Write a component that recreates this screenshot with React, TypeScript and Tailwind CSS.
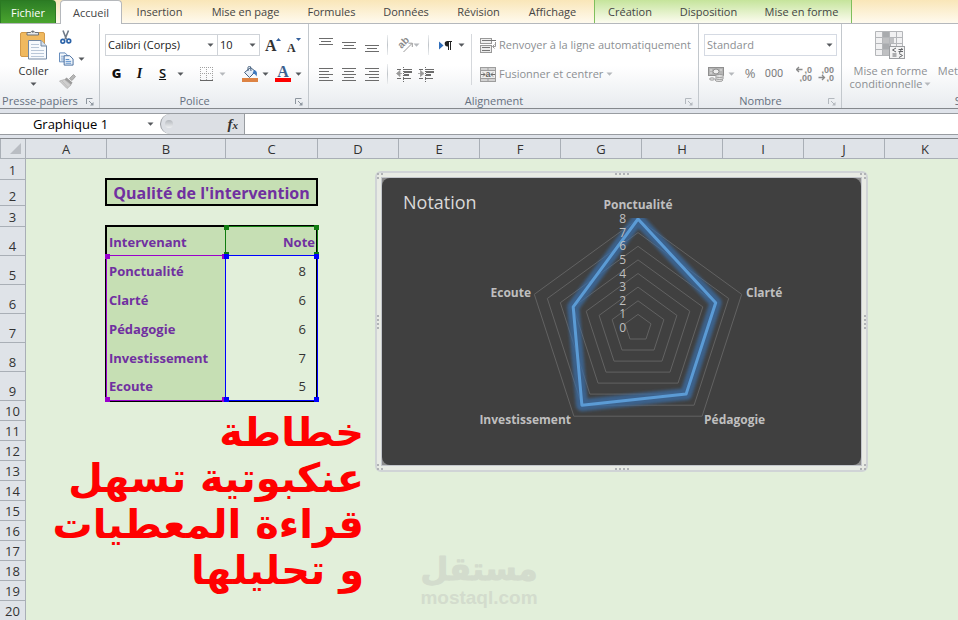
import type { ReactNode } from "react";
import clsx from "clsx";

const TABS = [
  { label: "Insertion", width: "w-[75px]" },
  { label: "Mise en page", width: "w-[97px]" },
  { label: "Formules", width: "w-[75px]" },
  { label: "Données", width: "w-[74px]" },
  { label: "Révision", width: "w-[71px]" },
  { label: "Affichage", width: "w-[77px]" },
];

const CHART_TABS = [
  { label: "Création", width: "w-[70px]" },
  { label: "Disposition", width: "w-[87px]" },
  { label: "Mise en forme", width: "w-[99px]" },
];

const COLUMNS = [
  { name: "A", width: "w-[81px]" },
  { name: "B", width: "w-[119px]" },
  { name: "C", width: "w-[92px]" },
  { name: "D", width: "w-[81px]" },
  { name: "E", width: "w-[81px]" },
  { name: "F", width: "w-[81px]" },
  { name: "G", width: "w-[81px]" },
  { name: "H", width: "w-[81px]" },
  { name: "I", width: "w-[81px]" },
  { name: "J", width: "w-[81px]" },
  { name: "K", width: "w-[81px]" },
];

const ROWS = [
  "h-[21px]",
  "h-[26px]",
  "h-[21px]",
  ...Array(6).fill("h-[29px]"),
  ...Array(11).fill("h-5"),
];

const NOTES = [
  { label: "Ponctualité", value: 8 },
  { label: "Clarté", value: 6 },
  { label: "Pédagogie", value: 6 },
  { label: "Investissement", value: 7 },
  { label: "Ecoute", value: 5 },
];

const CAPTION = ["خطاطة", "عنكبوتية تسهل", "قراءة المعطيات", "و تحليلها"];

/* ---------- small ribbon pieces ---------- */

const Caret = ({ muted = false }: { muted?: boolean }) => (
  <svg width="7" height="4" viewBox="0 0 7 4" aria-hidden="true" className="shrink-0">
    <path d="M0.5 0.5h6L3.5 3.8z" fill={muted ? "#b5b8bc" : "#55585c"} />
  </svg>
);

const Launcher = ({ muted = false }: { muted?: boolean }) => (
  <button type="button" aria-label="Options" className="flex size-2">
    <svg width="8" height="8" viewBox="0 0 8 8" fill="none" stroke={muted ? "#b3b8be" : "#8d959e"}>
      <path d="M0.5 6V0.5H6.5M3 3l3 3" />
      <path d="M4 7.5h3.500V4z" fill={muted ? "#b3b8be" : "#8d959e"} stroke="none" />
    </svg>
  </button>
);

const Separator = () => (
  <span className="h-5 w-px shrink-0 bg-linear-to-b from-[#eceef0] via-[#bfc4c9] to-[#eceef0]" />
);

type IconButtonProps = {
  label: string;
  className?: string;
  children: ReactNode;
};

const IconButton = ({ label, className, children }: IconButtonProps) => (
  <button
    type="button"
    aria-label={label}
    className={clsx("flex h-[22px] shrink-0 items-center justify-center", className)}
  >
    {children}
  </button>
);

type GroupProps = {
  title: string;
  className?: string;
  launcher?: boolean;
  muted?: boolean;
  children: ReactNode;
};

const Group = ({ title, className, launcher = true, muted, children }: GroupProps) => (
  <section
    aria-label={title}
    className={clsx(
      "flex h-[84px] shrink-0 flex-col justify-between border-r border-[#c3c8cd] bg-linear-to-b from-white from-50% to-[#e8ebef]",
      className
    )}
  >
    <div className="pt-[10px]">{children}</div>
    <div className="flex h-[13px] items-center gap-[6px] pr-[5px]">
      <h2 className="flex-1 text-center text-[#66707f]">{title}</h2>
      {launcher && <Launcher muted={muted} />}
    </div>
  </section>
);

type ComboProps = {
  label: string;
  value: string;
  className?: string;
  muted?: boolean;
};

const Combo = ({ label, value, className, muted }: ComboProps) => (
  <label className={clsx("relative block", className)}>
    <span className="sr-only">{label}</span>
    <select
      defaultValue={value}
      className={clsx(
        "h-[22px] w-full appearance-none border bg-white pl-[2px]",
        muted ? "border-[#d5dae3] text-[#8c8f93]" : "border-[#cfd3d8] text-[#1a1a1a]"
      )}
    >
      <option>{value}</option>
    </select>
    <span className="pointer-events-none absolute top-[9px] right-1">
      <Caret />
    </span>
  </label>
);

/* ---------- icons ---------- */

const PasteIcon = () => (
  <svg width="28" height="31" viewBox="0 0 28 31" aria-hidden="true">
    <rect x="0.5" y="3.500" width="24" height="24" rx="1.500" fill="#f0b95f" stroke="#d39a4a" />
    <path d="M7 6V3.500h3.500a2.500 2.500 0 0 1 4.500 0H18.500V6z" fill="#e6e8ea" stroke="#6d7278" />
    <circle cx="12.800" cy="2.800" r="1" fill="#6d7278" />
    <path d="M8.500 11.500h12.500l5.500 5.500v13h-18z" fill="#f7fafd" stroke="#7288a3" />
    <path d="M21 11.500v5.500h5.500" fill="#d5e0ec" stroke="#7288a3" />
    <path d="M11 15.500h8M11 18.500h8M11 21.500h13M11 24.500h13M11 27.500h13" stroke="#b9c7d8" />
  </svg>
);

const ScissorsIcon = () => (
  <svg width="12" height="15" viewBox="0 0 12 15" fill="none" aria-hidden="true">
    <path d="M3 0.500l3.500 9M8.500 0.500L5 9" stroke="#6f7a88" strokeWidth="1.600" />
    <circle cx="2.800" cy="11.300" r="1.900" stroke="#2a62a8" strokeWidth="1.600" />
    <circle cx="8.800" cy="11" r="1.900" stroke="#2a62a8" strokeWidth="1.600" />
  </svg>
);

const CopyIcon = () => (
  <svg width="16" height="14" viewBox="0 0 16 14" aria-hidden="true">
    <path d="M0.500 0.500h6l3 3v6.500h-9z" fill="#f4f8fc" stroke="#5b84b8" />
    <path d="M2 4h4M2 6h5M2 8h4" stroke="#7da0cb" />
    <path d="M5.500 3.500h6l3.500 3.500v6.500h-9.500z" fill="#f4f8fc" stroke="#41699c" />
    <path d="M7 7.500h4M7 9.500h6M7 11.500h6" stroke="#4f86c6" />
  </svg>
);

const BrushIcon = () => (
  <svg width="17" height="15" viewBox="0 0 17 15" aria-hidden="true">
    <path d="M10.500 4.500L14.500 0.500l2 2-3.500 4z" fill="#b6b6b6" stroke="#999" strokeWidth="0.800" />
    <path d="M7.500 3.500l6 5-1.500 2.500-6.500-5.500z" fill="#9c9c9c" />
    <path d="M5.500 5.500l6.500 5.500-4 3.500L0.500 7z" fill="#cfcfcf" stroke="#b0b0b0" strokeWidth="0.800" />
    <path d="M3 7l6 6.500" stroke="#b5b5b5" strokeWidth="0.700" />
  </svg>
);

const GrowIcon = ({ small = false }: { small?: boolean }) => (
  <span className="relative flex h-[22px] w-4 items-end pb-[2px]">
    <span
      className={clsx(
        "font-['Liberation_Serif',serif] font-bold text-[#333]",
        small ? "text-xs leading-3" : "text-base leading-4"
      )}
    >
      A
    </span>
    <svg width="5" height="3" viewBox="0 0 5 3" className={clsx("absolute top-[4px]", small ? "left-[9px]" : "left-[11px]")}>
      <path d={small ? "M0 0h5L2.500 3z" : "M0 3h5L2.500 0z"} fill="#35619c" />
    </svg>
  </span>
);

const BordersIcon = () => (
  <svg width="13" height="14" viewBox="0 0 13 14" fill="none" shapeRendering="crispEdges" aria-hidden="true">
    <path d="M0 0.500h13M0 6.500h13M0.500 0v13M6.500 0v13M12.500 0v13" stroke="#a2a2a2" strokeDasharray="1 1" />
    <path d="M0 13.500h13" stroke="#666" />
  </svg>
);

const BucketIcon = () => (
  <svg width="16" height="16" viewBox="0 0 16 16" aria-hidden="true">
    <path d="M2.500 6.500L8.500 1.500l5 4-6 6z" fill="#e5eef8" stroke="#46607f" />
    <path d="M6 5V1.500a1.500 1.500 0 0 1 2.500-.8L9 5" fill="none" stroke="#46607f" />
    <path d="M12 4c3 .500 3.500 3 2.500 6.500-1-2-2-3-4-3z" fill="#3f79bd" />
    <rect y="12" width="16" height="4" fill="#dd8344" />
  </svg>
);

const FontColorIcon = () => (
  <span className="flex h-4 w-4 flex-col items-center border-b-4 border-[#fe0000]">
    <span className="font-['Liberation_Serif',serif] text-base leading-3 font-bold text-[#3c608f]">A</span>
  </span>
);

type LinesProps = { rows: [number, number, number][] };

// each row is [x start, x end, y]
const Lines = ({ rows }: LinesProps) => (
  <svg width="14" height="14" viewBox="0 0 14 14" shapeRendering="crispEdges" aria-hidden="true">
    {rows.map(([x1, x2, y]) => (
      <path key={y} d={`M${x1} ${y + 0.5}H${x2}`} stroke="#6c6c6c" />
    ))}
  </svg>
);

const OrientationIcon = () => (
  <svg width="16" height="15" viewBox="0 0 16 15" aria-hidden="true">
    <text transform="translate(4.500 11) rotate(-45)" fontSize="10" fontWeight="700" fill="#8c8c8c" fontFamily="Liberation Sans, sans-serif">
      ab
    </text>
    <path d="M6.500 14L15 5.500M15.300 9V5.200h-3.800" fill="none" stroke="#9a9a9a" />
  </svg>
);

const DirectionIcon = () => (
  <svg width="13" height="9" viewBox="0 0 13 9" aria-hidden="true">
    <path d="M0 0.500L4.500 4.500 0 8.500z" fill="#2f6dba" />
    <path d="M8 0h5v1h-1v8h-1V1h-1v8H9V5.500a2.700 2.700 0 0 1-1-5.500z" fill="#222" />
  </svg>
);

const IndentIcon = ({ back = false }: { back?: boolean }) => (
  <svg width="16" height="15" viewBox="0 0 16 15" aria-hidden="true">
    <g shapeRendering="crispEdges" stroke="#6c6c6c">
      <path d="M7 2.500h9M7 11.500h8M1 2.500h4M1 11.500h4" />
      <path d="M8 5h8M8 8h5" strokeWidth="2" />
      <path d="M7.500 0v15" strokeDasharray="1 1" />
    </g>
    <path d={back ? "M4 3.500v6L0.500 6.500zM4 6.500h2" : "M2.500 3.500v6l3.500-3zM0 6.500h2.500"} fill="#999" stroke="#999" strokeWidth="0.800" />
  </svg>
);

const WrapIcon = () => (
  <svg width="16" height="15" viewBox="0 0 16 15" fill="none" aria-hidden="true">
    <rect x="0.500" y="0.500" width="11" height="5" fill="#f0f0f0" stroke="#999" />
    <path d="M2 2.500h14" stroke="#777" />
    <rect x="0.500" y="7.500" width="11" height="7" fill="#ececec" stroke="#999" />
    <path d="M2 9.500h8M2 12.500h8" stroke="#777" />
    <path d="M15.500 4v4.500h-2.500M14.500 6.500l-2 2 2 2" stroke="#999" />
  </svg>
);

const MergeIcon = () => (
  <svg width="16" height="15" viewBox="0 0 16 15" aria-hidden="true">
    <rect x="0.500" y="0.500" width="15" height="14" fill="#d2d2d2" stroke="#9d9d9d" />
    <path d="M0 3.500h16M0 11.500h16M8 0v3.500M8 11.500V15" stroke="#9d9d9d" />
    <rect x="1" y="4" width="14" height="7" fill="#eee" />
    <path d="M1 7.500h4M11 7.500h4M3 5.500l2 2-2 2M13 5.500l-2 2 2 2" fill="none" stroke="#6c6c6c" />
    <text x="5.500" y="10" fontSize="9" fontWeight="700" fill="#666" fontFamily="Liberation Sans, sans-serif">a</text>
  </svg>
);

const MoneyIcon = () => (
  <svg width="16" height="15" viewBox="0 0 16 15" aria-hidden="true">
    <rect x="0.500" y="0.500" width="15" height="8" fill="#b5b5b5" stroke="#8f8f8f" />
    <ellipse cx="8" cy="4.500" rx="3" ry="2.500" fill="#eee" stroke="#8f8f8f" />
    <path d="M2 3h2M2 6h2M12 3h2" stroke="#e5e5e5" />
    <g fill="#e3e3e3" stroke="#8f8f8f" strokeWidth="0.800">
      <ellipse cx="11" cy="13" rx="4" ry="1.500" />
      <ellipse cx="11.500" cy="11" rx="4" ry="1.500" />
      <ellipse cx="11.500" cy="9" rx="4" ry="1.500" />
      <ellipse cx="4" cy="12" rx="2.500" ry="1.200" />
    </g>
  </svg>
);

const DecimalIcon = ({ add = false }: { add?: boolean }) => (
  <svg width="17" height="16" viewBox="0 0 17 16" fontSize="9" fontWeight="700" fill="#8a8a8a" fontFamily="Liberation Sans, sans-serif" aria-hidden="true">
    <text x="16" y="7" textAnchor="end">{add ? ",0" : ",00"}</text>
    <text x="16" y="15" textAnchor="end">{add ? ",00" : ",0"}</text>
    <path
      d={add ? "M0.500 3.500h6M3 1L0.500 3.500 3 6" : "M0.500 11.500h6M4 9l2.500 2.500L4 14"}
      fill="none"
      stroke="#8a8a8a"
      strokeWidth="1.300"
    />
  </svg>
);

const ConditionalIcon = () => (
  <svg width="31" height="29" viewBox="0 0 31 29" aria-hidden="true">
    <rect x="0.500" y="0.500" width="27" height="24" fill="#f1f1f2" />
    <path d="M7 0.500h7v6H7z" fill="#a9abae" />
    <path d="M7 6.500h12v6H7z" fill="#bfc0c2" />
    <path d="M7 12.500h9v6H7z" fill="#a9abae" />
    <path d="M7 18.500h7v6H7z" fill="#bfc0c2" />
    <path d="M0.500 0.500h27v24H0.500zM0.500 6.500h27M0.500 12.500h27M0.500 18.500h27M7.500 0v25M14.500 0v25M21.500 0v25" fill="none" stroke="#b4b6b9" />
    <rect x="14.500" y="15.500" width="15" height="12" fill="#f4f4f4" stroke="#9c9ea1" />
    <path d="M21 17l-3.500 2 3.500 2M17.500 23h4M17.500 25h4M23.500 18.500h4.500M23.500 20.500h4.500M27 17l-2.500 5M24 22.500l3.500 2-3.500 2" fill="none" stroke="#65676a" />
  </svg>
);

/* ---------- ribbon ---------- */

const TabBar = () => (
  <nav aria-label="Ruban" className="flex h-6 shrink-0 border-b border-[#b5b8bc] bg-linear-to-b from-[#f9e6b8] to-[#fffaee] text-[#444] *:pt-[2px]">
    <button type="button" className="w-14 rounded-tr-sm border border-b-0 border-[#2b7a22] bg-linear-to-b from-[#2c7d25] to-[#4aa52e] text-white">
      Fichier
    </button>
    <button type="button" className="-mb-px ml-1 w-[62px] rounded-t-sm border border-b-0 border-[#b5b8bc] bg-white">
      Accueil
    </button>
    {TABS.map((tab) => (
      <button key={tab.label} type="button" className={clsx("shrink-0", tab.width)}>
        {tab.label}
      </button>
    ))}
    <div className="ml-[3px] flex shrink-0 border-x border-[#7fbf5c] bg-linear-to-b from-[#c5e49b] to-[#fdfcf0]">
      {CHART_TABS.map((tab) => (
        <button key={tab.label} type="button" className={clsx("shrink-0", tab.width)}>
          {tab.label}
        </button>
      ))}
    </div>
  </nav>
);

const Clipboard = () => (
  <Group title="Presse-papiers" className="w-[100px]">
    <div className="-mt-[6px] flex">
      <button type="button" className="flex w-[57px] flex-col items-center pt-px pl-[10px] text-[#333]">
        <PasteIcon />
        <span className="leading-[22px]">Coller</span>
        <span><Caret /></span>
      </button>
      <div className="-mt-[2px] flex flex-col">
        <IconButton label="Couper" className="w-[18px]"><ScissorsIcon /></IconButton>
        <IconButton label="Copier" className="w-7 justify-start gap-1 pl-[2px]"><CopyIcon /><Caret /></IconButton>
        <IconButton label="Reproduire la mise en forme" className="w-5"><BrushIcon /></IconButton>
      </div>
    </div>
  </Group>
);

const FontGroup = () => (
  <Group title="Police" className="w-[209px]">
    <div className="flex flex-col gap-[7px] pl-[5px]">
      <div className="flex">
        <Combo label="Police" value="Calibri (Corps)" className="w-[113px]" />
        <Combo label="Taille" value="10" className="-ml-px w-[43px]" />
        <IconButton label="Agrandir la police" className="ml-[2px] w-[22px]"><GrowIcon /></IconButton>
        <IconButton label="Réduire la police" className="w-[22px]"><GrowIcon small /></IconButton>
      </div>
      <div className="flex items-center text-[#111]">
        <IconButton label="Gras" className="w-[23px] text-[13px] font-extrabold">G</IconButton>
        <IconButton label="Italique" className="w-[23px] font-['Liberation_Serif',serif] text-sm font-bold italic">I</IconButton>
        <IconButton label="Souligné" className="w-[23px] text-[13px] font-semibold underline">S</IconButton>
        <IconButton label="Type de soulignement" className="w-3"><Caret /></IconButton>
        <span className="ml-[2px]"><Separator /></span>
        <IconButton label="Bordures" className="ml-3 gap-[6px]"><BordersIcon /><Caret muted /></IconButton>
        <span className="ml-2"><Separator /></span>
        <IconButton label="Couleur de remplissage" className="ml-2 gap-1"><BucketIcon /><Caret /></IconButton>
        <IconButton label="Couleur de police" className="ml-[6px] gap-1"><FontColorIcon /><Caret /></IconButton>
      </div>
    </div>
  </Group>
);

const AlignGroup = () => (
  <Group title="Alignement" className="w-[390px]" muted>
    <div className="flex">
      <div className="flex w-[163px] flex-col gap-[7px] border-r border-[#d5d8dc] pl-[10px]">
        <div className="flex items-center">
          <IconButton label="Aligner en haut" className="w-[23px] justify-start">
            <Lines rows={[[0, 14, 0], [2, 12, 3], [0, 14, 6]]} />
          </IconButton>
          <IconButton label="Aligner au centre" className="w-[23px] justify-start">
            <Lines rows={[[0, 14, 4], [2, 12, 7], [0, 14, 10]]} />
          </IconButton>
          <IconButton label="Aligner en bas" className="w-[22px] justify-start">
            <Lines rows={[[0, 14, 7], [2, 12, 10], [0, 14, 13]]} />
          </IconButton>
          <Separator />
          <IconButton label="Orientation" className="w-10"><OrientationIcon /><Caret muted /></IconButton>
          <Separator />
          <IconButton label="Sens du texte" className="ml-[10px] gap-[6px]"><DirectionIcon /><Caret /></IconButton>
        </div>
        <div className="flex items-center">
          <IconButton label="Aligner à gauche" className="w-[23px] justify-start">
            <Lines rows={[[0, 14, 1], [0, 10, 4], [0, 14, 7], [0, 10, 10], [0, 14, 13]]} />
          </IconButton>
          <IconButton label="Centrer" className="w-[23px] justify-start">
            <Lines rows={[[0, 14, 1], [2, 12, 4], [0, 14, 7], [2, 12, 10], [0, 14, 13]]} />
          </IconButton>
          <IconButton label="Aligner à droite" className="w-[22px] justify-start">
            <Lines rows={[[0, 14, 1], [4, 14, 4], [0, 14, 7], [4, 14, 10], [0, 14, 13]]} />
          </IconButton>
          <Separator />
          <IconButton label="Diminuer le retrait" className="ml-2"><IndentIcon back /></IconButton>
          <IconButton label="Augmenter le retrait" className="ml-[6px]"><IndentIcon /></IconButton>
        </div>
      </div>
      <div className="flex flex-col gap-[7px] pl-2 text-[#8c8f93]">
        <button type="button" className="flex h-[22px] items-center gap-[3px] whitespace-nowrap">
          <WrapIcon />
          Renvoyer à la ligne automatiquement
        </button>
        <button type="button" className="flex h-[22px] items-center gap-[3px] whitespace-nowrap">
          <MergeIcon />
          Fusionner et centrer
          <Caret muted />
        </button>
      </div>
    </div>
  </Group>
);

const NumberGroup = () => (
  <Group title="Nombre" className="w-[143px]" muted>
    <div className="flex flex-col gap-[7px] pr-1 pl-[5px] text-[#7d7d7d]">
      <Combo label="Format de nombre" value="Standard" muted />
      <div className="flex items-center">
        <IconButton label="Format comptable" className="ml-1 gap-1"><MoneyIcon /><Caret muted /></IconButton>
        <IconButton label="Pourcentage" className="ml-2 w-[14px] text-[13px]">%</IconButton>
        <IconButton label="Séparateur de milliers" className="ml-2 w-[18px] font-[Roboto,sans-serif]">000</IconButton>
        <span className="ml-[6px]"><Separator /></span>
        <IconButton label="Ajouter une décimale" className="ml-[7px]"><DecimalIcon add /></IconButton>
        <IconButton label="Réduire les décimales" className="ml-[5px]"><DecimalIcon /></IconButton>
      </div>
    </div>
  </Group>
);

const StyleGroup = () => (
  <Group title="Style" className="w-[256px]" launcher={false}>
    <div className="-mt-[3px] flex leading-[13px] text-[#8c8f93]">
      <button type="button" className="flex w-[97px] flex-col items-center whitespace-nowrap">
        <ConditionalIcon />
        <span className="mt-1">Mise en forme</span>
        <span className="flex items-center gap-[2px]">conditionnelle <Caret muted /></span>
      </button>
      <button type="button" className="flex w-[93px] flex-col items-center whitespace-nowrap">
        <ConditionalIcon />
        <span className="mt-1">Mettre sous forme</span>
        <span>de tableau</span>
      </button>
    </div>
  </Group>
);

const FormulaBar = () => (
  <div className="flex h-[30px] shrink-0 flex-col border-b border-[#85888d] bg-[#dfe3ea] pt-1">
    <div className="flex h-[22px] border-y border-[#989ca1] bg-white">
      <label className="flex w-[160px] items-center">
        <span className="sr-only">Zone Nom</span>
        <input defaultValue="Graphique 1" className="w-[147px] bg-transparent pt-px pr-[6px] text-center text-[13px] text-black" />
        <Caret />
      </label>
      <div className="flex w-[85px] items-center justify-between rounded-l-full border-r border-l border-[#989ca1] bg-[#dcdfe4] pr-[6px] pl-1">
        <span className="size-2 rounded-full bg-linear-to-b from-[#b4b8bd] to-[#eef0f2]" />
        <button type="button" aria-label="Insérer une fonction" className="font-['Liberation_Serif',serif] text-[15px] leading-4 font-bold text-[#333] italic">
          f<span className="text-[11px]">x</span>
        </button>
      </div>
      <input aria-label="Barre de formule" className="min-w-0 flex-1 bg-white" />
    </div>
  </div>
);

/* ---------- sheet ---------- */

type RangeProps = { className: string; handle: string };

const Range = ({ className, handle }: RangeProps) => (
  <div className={clsx("absolute border", className)} aria-hidden="true">
    <span className={clsx("absolute -top-[2px] -left-[2px] size-[5px]", handle)} />
    <span className={clsx("absolute -top-[2px] -right-[2px] size-[5px]", handle)} />
    <span className={clsx("absolute -bottom-[2px] -left-[2px] size-[5px]", handle)} />
    <span className={clsx("absolute -right-[2px] -bottom-[2px] size-[5px]", handle)} />
  </div>
);

const NotesTable = () => (
  <div className="relative mt-[19px] h-[176px] w-[213px]">
    <table className="w-full table-fixed border-separate border-spacing-0 border-2 border-black text-[13px] text-[#7030a0]">
      <colgroup>
        <col className="w-[118px]" />
        <col />
      </colgroup>
      <thead>
        <tr className="h-[29px] bg-[#c6dfb4]">
          <th scope="col" className="pt-[2px] pl-[2px] text-left font-bold">Intervenant</th>
          <th scope="col" className="pt-[2px] pr-px text-right font-bold">Note</th>
        </tr>
      </thead>
      <tbody>
        {NOTES.map((note, i) => (
          <tr key={note.label} className={i === NOTES.length - 1 ? "h-[28px]" : "h-[29px]"}>
            <th scope="row" className="bg-[#c6dfb4] pt-[2px] pl-[2px] text-left font-bold">{note.label}</th>
            <td className="pt-[2px] pr-[10px] text-right text-[#333]">{note.value}</td>
          </tr>
        ))}
      </tbody>
    </table>
    <Range className="top-[1px] right-0 h-[30px] w-[93px] border-[#107c10]" handle="bg-[#107c10]" />
    <Range className="top-[30px] left-[1px] h-[146px] w-[120px] border-[#9900cc]" handle="bg-[#9900cc]" />
    <Range className="top-[30px] right-0 h-[146px] w-[93px] border-[#0000ff]" handle="bg-[#0000ff]" />
  </div>
);

const CENTER_X = 256;
const CENTER_Y = 150;
const RADIUS = 109;
const MAX = 8;

const polygon = (values: number[]) =>
  values
    .map((value, i) => {
      const angle = (i * 2 * Math.PI) / values.length;
      const r = (value / MAX) * RADIUS;
      return `${(CENTER_X + r * Math.sin(angle)).toFixed(1)},${(CENTER_Y - r * Math.cos(angle)).toFixed(1)}`;
    })
    .join(" ");

const LABELS = [
  { x: 256, y: 31, anchor: "middle" },
  { x: 364, y: 119, anchor: "start" },
  { x: 322, y: 246, anchor: "start" },
  { x: 189, y: 246, anchor: "end" },
  { x: 149, y: 119, anchor: "end" },
] as const;

const RadarChart = () => {
  const data = polygon(NOTES.map((n) => n.value));
  return (
    <svg viewBox="0 0 479 287" className="block h-[287px] w-[479px]" role="img" aria-label="Notation">
      <defs>
        <filter id="glow" x="-10%" y="-10%" width="120%" height="120%">
          <feGaussianBlur stdDeviation="1.5" />
        </filter>
        <clipPath id="plot">
          <rect x="140" y="40" width="230" height="220" />
        </clipPath>
      </defs>
      {[1, 2, 3, 4, 5, 6, 7, 8].map((n) => (
        <polygon key={n} points={polygon(Array(5).fill(n))} fill="none" stroke="#626262" />
      ))}
      <g clipPath="url(#plot)" fill="none" strokeLinejoin="round">
        <polygon points={data} stroke="#3a6ea5" strokeOpacity="0.75" strokeWidth="12" filter="url(#glow)" />
        <polygon points={data} stroke="#5b9bd5" strokeWidth="3" />
      </g>
      <text x="21" y="31" fontSize="18" fill="#d9d9d9">Notation</text>
      <g fontSize="12" fill="#bfbfbf" textAnchor="end">
        {[0, 1, 2, 3, 4, 5, 6, 7, 8].map((n) => (
          <text key={n} x="244" y={Math.round(CENTER_Y - (n * RADIUS) / MAX) + 4}>{n}</text>
        ))}
      </g>
      <g fontSize="12" fontWeight="700" fill="#bfbfbf">
        {NOTES.map((note, i) => (
          <text key={note.label} x={LABELS[i].x} y={LABELS[i].y} textAnchor={LABELS[i].anchor}>{note.label}</text>
        ))}
      </g>
    </svg>
  );
};

const Grip = ({ className }: { className: string }) => (
  <span className={clsx("absolute flex gap-[2px]", className)} aria-hidden="true">
    {[0, 1, 2, 3].map((n) => (
      <span key={n} className="size-[2px] bg-[#b0b3b5]" />
    ))}
  </span>
);

const CornerGrip = ({ className }: { className: string }) => (
  <span className={clsx("absolute grid grid-cols-2 gap-[2px]", className)} aria-hidden="true">
    {[0, 1, 2, 3].map((n) => (
      <span key={n} className="size-[2px] bg-[#b0b3b5]" />
    ))}
  </span>
);

const ChartFrame = () => (
  <figure className="relative mt-3 self-start rounded-md border-2 border-[#d0d4d6] bg-[#e8ebe4] p-1">
    <Grip className="top-0 left-1/2 -translate-x-1/2" />
    <Grip className="bottom-0 left-1/2 -translate-x-1/2" />
    <Grip className="top-1/2 left-0 -translate-y-1/2 flex-col" />
    <Grip className="top-1/2 right-0 -translate-y-1/2 flex-col" />
    <CornerGrip className="top-0 left-0" />
    <CornerGrip className="top-0 right-0" />
    <CornerGrip className="bottom-0 left-0" />
    <CornerGrip className="right-0 bottom-0" />
    <div className="relative border border-[#c3c6cb] bg-[#8b8b8b]">
      <div className="overflow-hidden rounded-lg bg-[#404040]">
        <RadarChart />
      </div>
    </div>
  </figure>
);

const Watermark = () => (
  <div className="absolute bottom-3 left-1/2 flex -translate-x-1/2 flex-col items-center text-[#d3dccd]" aria-hidden="true">
    <svg width="118" height="38" viewBox="0 0 118 38" overflow="visible">
      <text
        x="59"
        y="30"
        textAnchor="middle"
        direction="rtl"
        fontSize="32"
        fontWeight="700"
        fontFamily="DejaVu Sans, sans-serif"
        fill="currentColor"
        stroke="currentColor"
        strokeLinejoin="round"
      >
        مستقل
      </text>
    </svg>
    <span className="font-['Liberation_Sans',sans-serif] text-[19px] leading-5 font-bold">mostaql.com</span>
  </div>
);

const Sheet = () => (
  <main className="flex min-h-0 flex-1 flex-col bg-[#e2efda]">
    <div className="flex h-5 shrink-0 overflow-hidden border-b border-[#a9afb6] bg-[#dfe3e8] text-[13px] leading-[18px] text-[#333]">
      <button type="button" aria-label="Tout sélectionner" className="flex w-[26px] shrink-0 items-end justify-end border-r border-l border-[#a9afb6] pr-1 pb-1">
        <svg width="11" height="11" viewBox="0 0 11 11"><path d="M11 0v11H0z" fill="#b9bdc3" /></svg>
      </button>
      {COLUMNS.map((col) => (
        <div key={col.name} className={clsx("flex shrink-0 items-end justify-center border-r border-[#a9afb6]", col.width)}>
          {col.name}
        </div>
      ))}
    </div>
    <div className="flex min-h-0 flex-1 overflow-hidden">
      <div className="w-[26px] shrink-0 border-r border-[#a9afb6] bg-[#dfe3e8] text-[13px] leading-[18px] text-[#333]">
        {ROWS.map((height, i) => (
          <div key={i} className={clsx("flex items-end justify-center border-b border-[#a9afb6]", height)}>
            {i + 1}
          </div>
        ))}
      </div>
      <div className="w-[349px] shrink-0">
        <div className="pt-[19px] pl-[79px]">
          <h1 className="flex h-7 w-[213px] items-center justify-center border-2 border-black bg-[#c6dfb4] pt-[2px] text-base font-bold whitespace-nowrap text-[#7030a0]">
            Qualité de l'intervention
          </h1>
          <NotesTable />
        </div>
        <p dir="rtl" className="mt-2 pr-[11px] font-['DejaVu_Sans',sans-serif] text-[40px] leading-[46px] font-bold whitespace-nowrap text-[#ff0000]">
          {CAPTION.map((line) => (
            <span key={line} className="block">{line}</span>
          ))}
        </p>
      </div>
      <ChartFrame />
    </div>
  </main>
);

const App = () => (
  <div className="relative flex h-screen flex-col overflow-hidden bg-[#e2efda] font-['Open_Sans','Noto_Sans',sans-serif] text-[11px]">
    <TabBar />
    <div className="flex shrink-0 overflow-hidden border-b border-[#85888d]">
      <Clipboard />
      <FontGroup />
      <AlignGroup />
      <NumberGroup />
      <StyleGroup />
    </div>
    <FormulaBar />
    <Sheet />
    <Watermark />
  </div>
);

export default App;
